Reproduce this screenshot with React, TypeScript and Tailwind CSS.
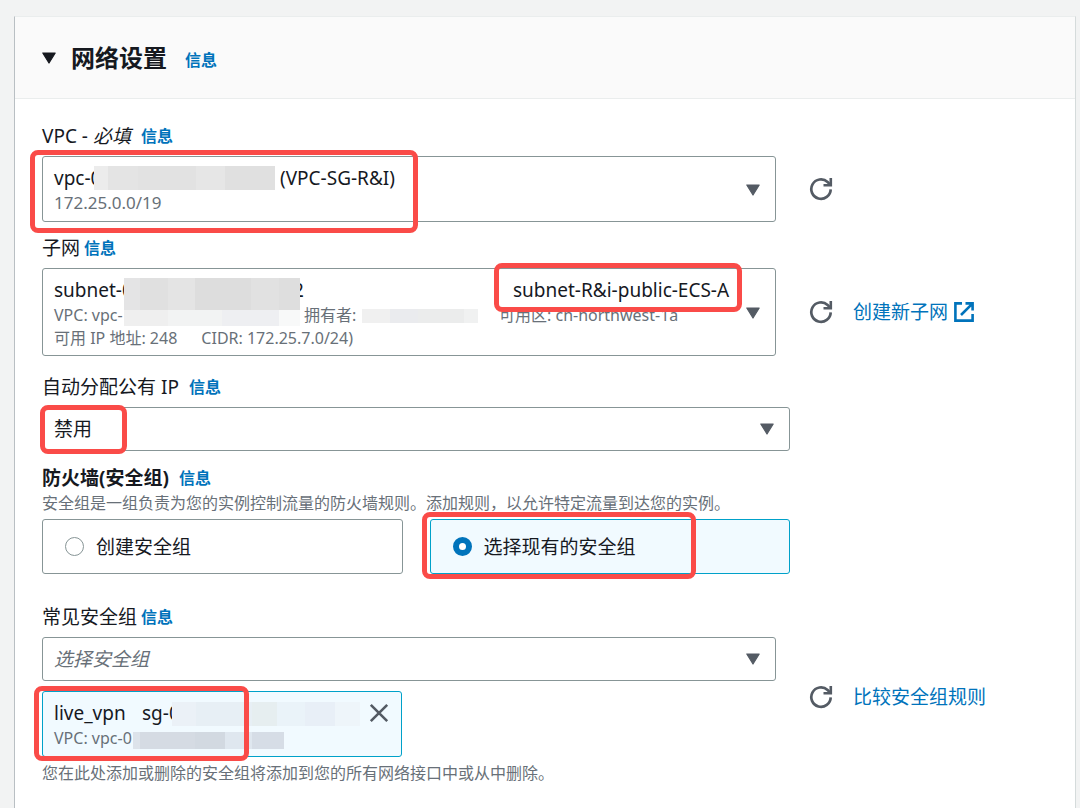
import { useState, type ReactNode } from "react";

type Cell = { color: string; grow: number };

function InfoLink({ className = "" }: { className?: string }) {
  return (
    <a
      href="#info"
      className={`text-[16px] font-bold text-[#0073bb] hover:underline ${className}`}
    >
      信息
    </a>
  );
}

function Caret({ className = "" }: { className?: string }) {
  return (
    <svg
      viewBox="0 0 16 12"
      className={`pointer-events-none h-3 w-4 shrink-0 fill-current ${className}`}
      aria-hidden="true"
    >
      <path
        d="M1.8 1h12.4L8 11z"
        stroke="currentColor"
        strokeWidth="1.2"
        strokeLinejoin="round"
      />
    </svg>
  );
}

function RefreshButton({ label }: { label: string }) {
  return (
    <button type="button" aria-label={label} className="cursor-pointer text-[#545b64]">
      <svg viewBox="0 0 24 24" className="h-6 w-6" fill="none" aria-hidden="true">
        <path
          d="M21.7 12.4A9.7 9.7 0 1 1 18.6 5L21 7.4"
          stroke="currentColor"
          strokeWidth="2.7"
        />
        <path d="M21.8 1v7.3h-7.3" stroke="currentColor" strokeWidth="2.6" />
      </svg>
    </button>
  );
}

// Annotation frame drawn over a control
function Highlight({ className }: { className: string }) {
  return (
    <span
      aria-hidden="true"
      className={`pointer-events-none absolute z-10 rounded-lg border-[5px] border-[#fa4b48] ${className}`}
    />
  );
}

// Hides part of an identifier behind blocks of flat colour
function Mosaic({ cells, className }: { cells: Cell[]; className: string }) {
  return (
    <span aria-hidden="true" className={`absolute flex ${className}`}>
      {cells.map((c, i) => (
        <span key={i} style={{ flexGrow: c.grow, backgroundColor: c.color }} />
      ))}
    </span>
  );
}

const VPC_CELLS: Cell[] = [
  { color: "#ececec", grow: 14 },
  { color: "#e4e4e4", grow: 30 },
  { color: "#e2e2e2", grow: 57 },
  { color: "#e6e6e6", grow: 29 },
  { color: "#e0e0e0", grow: 50 },
];

const SUBNET_CELLS: Cell[] = [
  { color: "#e4e4e5", grow: 16 },
  { color: "#e0e0e0", grow: 28 },
  { color: "#e4e4e4", grow: 27 },
  { color: "#dddddd", grow: 56 },
  { color: "#e1e1e1", grow: 28 },
  { color: "#dedede", grow: 21 },
];

const SUBNET_VPC_CELLS: Cell[] = [
  { color: "#efefef", grow: 44 },
  { color: "#f2f3f3", grow: 54 },
  { color: "#eeeff2", grow: 57 },
  { color: "#f8f9f9", grow: 21 },
];

const OWNER_CELLS: Cell[] = [
  { color: "#f0f0f0", grow: 28 },
  { color: "#eaebee", grow: 28 },
  { color: "#ebecec", grow: 46 },
  { color: "#f0f1f1", grow: 14 },
];

const GROUP_CELLS: Cell[] = [
  { color: "#ebf1f7", grow: 24 },
  { color: "#e7eff5", grow: 56 },
  { color: "#e6eef0", grow: 25 },
  { color: "#eaf3f9", grow: 28 },
  { color: "#e8eff7", grow: 30 },
  { color: "#eef5fa", grow: 25 },
];

const GROUP_VPC_CELLS: Cell[] = [
  { color: "#dde3ea", grow: 7 },
  { color: "#d5dbe3", grow: 55 },
  { color: "#d2d9e1", grow: 30 },
  { color: "#dfe7ef", grow: 27 },
  { color: "#d6dde6", grow: 32 },
];

function Field({
  label,
  id,
  className = "",
  infoClass = "ml-1",
  children,
}: {
  label: ReactNode;
  id: string;
  className?: string;
  infoClass?: string;
  children: ReactNode;
}) {
  return (
    <div className={className}>
      <div className="mb-2 flex h-6 items-center">
        <label htmlFor={id}>{label}</label>
        <InfoLink className={infoClass} />
      </div>
      {children}
    </div>
  );
}

function SideActions({ children }: { children: ReactNode }) {
  return (
    <div className="flex w-[272px] shrink-0 items-center gap-5 pl-[33px]">
      {children}
    </div>
  );
}

const BOX = "rounded-[3px] border border-[#879596] bg-white";

function RadioTile({
  label,
  value,
  checked,
  onChange,
  highlight,
}: {
  label: string;
  value: string;
  checked: boolean;
  onChange: (v: string) => void;
  highlight?: ReactNode;
}) {
  return (
    <label
      className={`relative flex h-[55px] flex-1 cursor-pointer items-center gap-3 rounded-[3px] border px-[22px] ${
        checked ? "border-[#00a1c9] bg-[#f1faff]" : "border-[#879596] bg-white"
      }`}
    >
      <input
        type="radio"
        name="firewall"
        value={value}
        checked={checked}
        onChange={() => onChange(value)}
        className="h-[19px] w-[19px] appearance-none rounded-full border border-[#879596] bg-white checked:border-[6px] checked:border-[#0073bb]"
      />
      {label}
      {highlight}
    </label>
  );
}

export default function App() {
  const [open, setOpen] = useState(true);
  const [firewall, setFirewall] = useState("existing");
  const [attached, setAttached] = useState(true);

  return (
    <main className="min-h-screen bg-[#f2f3f3] pt-4 pr-1 pl-[14px] font-['Noto_Sans','Noto_Sans_CJK_SC',sans-serif] text-[19px] leading-6 text-[#16191f]">
      <section className="min-h-[calc(100vh-16px)] border border-b-0 border-[#d5dbdb] border-t-[#eaeded] border-l-[#b9bfc3] bg-white">
        <header className="flex h-[82px] items-center border-b border-[#eaeded] bg-[#fafafa] px-[26px]">
          <button
            type="button"
            aria-expanded={open}
            onClick={() => setOpen(!open)}
            className="flex cursor-pointer items-center gap-[14px]"
          >
            <Caret />
            <h2 className="text-[24px] font-bold">网络设置</h2>
          </button>
          <InfoLink className="ml-[18px] pt-1" />
        </header>

        {open && (
          <form className="px-[27px] pt-[25px]" onSubmit={(e) => e.preventDefault()}>
            <Field
              id="vpc"
              label={
                <>
                  VPC - <em>必填</em>
                </>
              }
              infoClass="ml-[10px]"
            >
              <div className="flex">
                <button
                  id="vpc"
                  type="button"
                  aria-haspopup="listbox"
                  className={`${BOX} relative flex min-w-0 flex-1 cursor-pointer items-center pt-2 pr-[14px] pb-[6px] pl-[11px] text-left`}
                >
                  <span className="flex-1">
                    <span className="flex h-[26px] items-center">
                      <span className="w-[226px]">vpc-0</span>
                      (VPC-SG-R&amp;I)
                    </span>
                    <span className="flex h-6 items-center text-[17px] text-[#687078]">
                      172.25.0.0/19
                    </span>
                  </span>
                  <Caret className="text-[#545b64]" />
                  <Mosaic
                    cells={VPC_CELLS}
                    className="top-[9px] left-[51px] h-6 w-[181px]"
                  />
                  <Highlight className="-top-[7px] -left-[13px] h-[83px] w-[388px]" />
                </button>
                <SideActions>
                  <RefreshButton label="刷新 VPC" />
                </SideActions>
              </div>
            </Field>

            <Field id="subnet" label="子网" className="mt-[14px]">
              <div className="flex">
                <button
                  id="subnet"
                  type="button"
                  aria-haspopup="listbox"
                  className={`${BOX} relative flex min-w-0 flex-1 cursor-pointer items-center pt-2 pr-[14px] pb-[6px] pl-[11px] text-left`}
                >
                  <span className="min-w-0 flex-1 text-[16px] whitespace-nowrap text-[#687078]">
                    <span className="flex h-[26px] items-center text-[19px] text-[#16191f]">
                      <span className="w-[239px] shrink-0">subnet-0</span>
                      <span className="w-[220px] shrink-0">2</span>
                      subnet-R&amp;i-public-ECS-A
                    </span>
                    <span className="flex h-6 items-center">
                      <span className="w-[250px]">VPC: vpc-</span>
                      <span className="w-[195px]">拥有者:</span>
                      可用区: cn-northwest-1a
                    </span>
                    <span className="flex h-[22px] items-center gap-6">
                      <span>可用 IP 地址: 248</span>
                      <span>CIDR: 172.25.7.0/24)</span>
                    </span>
                  </span>
                  <Caret className="text-[#545b64]" />
                  <Mosaic
                    cells={SUBNET_CELLS}
                    className="top-[9px] left-[81px] h-8 w-[176px]"
                  />
                  <Mosaic
                    cells={SUBNET_VPC_CELLS}
                    className="top-[41px] left-[81px] h-4 w-[176px]"
                  />
                  <Mosaic
                    cells={OWNER_CELLS}
                    className="top-10 left-[319px] h-[14px] w-[116px]"
                  />
                  <Highlight className="-top-[6px] left-[451px] h-[49px] w-[248px]" />
                </button>
                <SideActions>
                  <RefreshButton label="刷新子网" />
                  <a
                    href="#create-subnet"
                    className="flex items-center gap-[6px] text-[#0073bb] hover:underline"
                  >
                    创建新子网
                    <svg viewBox="0 0 20 20" className="h-5 w-5" fill="none" aria-hidden="true">
                      <g stroke="currentColor" strokeWidth="2.6">
                        <path d="M8 1.4H1.4v17.2h17.2V12" />
                        <path d="M11.5 1.4h7.1v7.1M18.4 1.6L7 13" />
                      </g>
                    </svg>
                  </a>
                </SideActions>
              </div>
            </Field>

            <Field
              id="public-ip"
              label="自动分配公有 IP"
              className="mt-[19px] mr-[258px]"
              infoClass="ml-[10px]"
            >
              <div className="relative flex items-center">
                <select
                  id="public-ip"
                  defaultValue="off"
                  className={`${BOX} h-11 w-full cursor-pointer appearance-none pl-[11px]`}
                >
                  <option value="off">禁用</option>
                  <option value="on">启用</option>
                </select>
                <Caret className="absolute right-[15px] text-[#545b64]" />
                <Highlight className="-top-[2px] -left-[2px] h-[49px] w-[87px]" />
              </div>
            </Field>

            <fieldset className="mt-[15px] mr-[258px]">
              <legend className="flex h-6 items-center">
                <span className="font-bold">防火墙(安全组)</span>
                <InfoLink className="ml-[10px]" />
              </legend>
              <p className="mt-[2px] mb-[5px] text-[16px] leading-[22px] whitespace-nowrap text-[#687078]">
                安全组是一组负责为您的实例控制流量的防火墙规则。添加规则，以允许特定流量到达您的实例。
              </p>
              <div className="flex gap-[27px]">
                <RadioTile
                  label="创建安全组"
                  value="create"
                  checked={firewall === "create"}
                  onChange={setFirewall}
                />
                <RadioTile
                  label="选择现有的安全组"
                  value="existing"
                  checked={firewall === "existing"}
                  onChange={setFirewall}
                  highlight={
                    <Highlight className="-top-2 -left-[9px] h-[67px] w-[274px]" />
                  }
                />
              </div>
            </fieldset>

            <Field id="groups" label="常见安全组" className="mt-[31px]">
              <div className="flex">
                <div className="min-w-0 flex-1">
                  <div className="relative flex items-center">
                    <select
                      id="groups"
                      defaultValue=""
                      className={`${BOX} h-11 w-full cursor-pointer appearance-none pl-[11px] text-[#687078] italic`}
                    >
                      <option value="">选择安全组</option>
                      <option value="live_vpn">live_vpn</option>
                    </select>
                    <Caret className="absolute right-[15px] text-[#545b64]" />
                  </div>
                  {attached && (
                    <div className="relative mt-[10px] flex w-[49%] justify-between rounded-[3px] border border-[#00a1c9] bg-[#f1faff] pt-2 pr-3 pb-[6px] pl-[11px]">
                      <div>
                        <div className="flex h-[26px] items-center">
                          <span className="w-[88px]">live_vpn</span>
                          sg-0
                        </div>
                        <div className="flex h-6 items-center text-[16px] text-[#687078]">
                          VPC: vpc-0
                        </div>
                      </div>
                      <button
                        type="button"
                        aria-label="删除 live_vpn"
                        onClick={() => setAttached(false)}
                        className="h-[26px] cursor-pointer text-[#545b64]"
                      >
                        <svg viewBox="0 0 20 20" className="h-5 w-5" aria-hidden="true">
                          <path
                            d="M1.8 1.8l16.4 16.4M18.2 1.8L1.8 18.2"
                            stroke="currentColor"
                            strokeWidth="2.6"
                          />
                        </svg>
                      </button>
                      <Mosaic
                        cells={GROUP_CELLS}
                        className="top-[10px] left-[129px] h-6 w-[188px]"
                      />
                      <Mosaic
                        cells={GROUP_VPC_CELLS}
                        className="top-10 left-[90px] h-[17px] w-[151px]"
                      />
                      <Highlight className="-top-[6px] -left-[9px] h-[75px] w-[215px]" />
                    </div>
                  )}
                </div>
                <SideActions>
                  <RefreshButton label="刷新安全组" />
                  <a href="#compare" className="text-[#0073bb] hover:underline">
                    比较安全组规则
                  </a>
                </SideActions>
              </div>
              <p className="mt-[5px] text-[16px] leading-[22px] text-[#687078]">
                您在此处添加或删除的安全组将添加到您的所有网络接口中或从中删除。
              </p>
            </Field>
          </form>
        )}
      </section>
    </main>
  );
}
